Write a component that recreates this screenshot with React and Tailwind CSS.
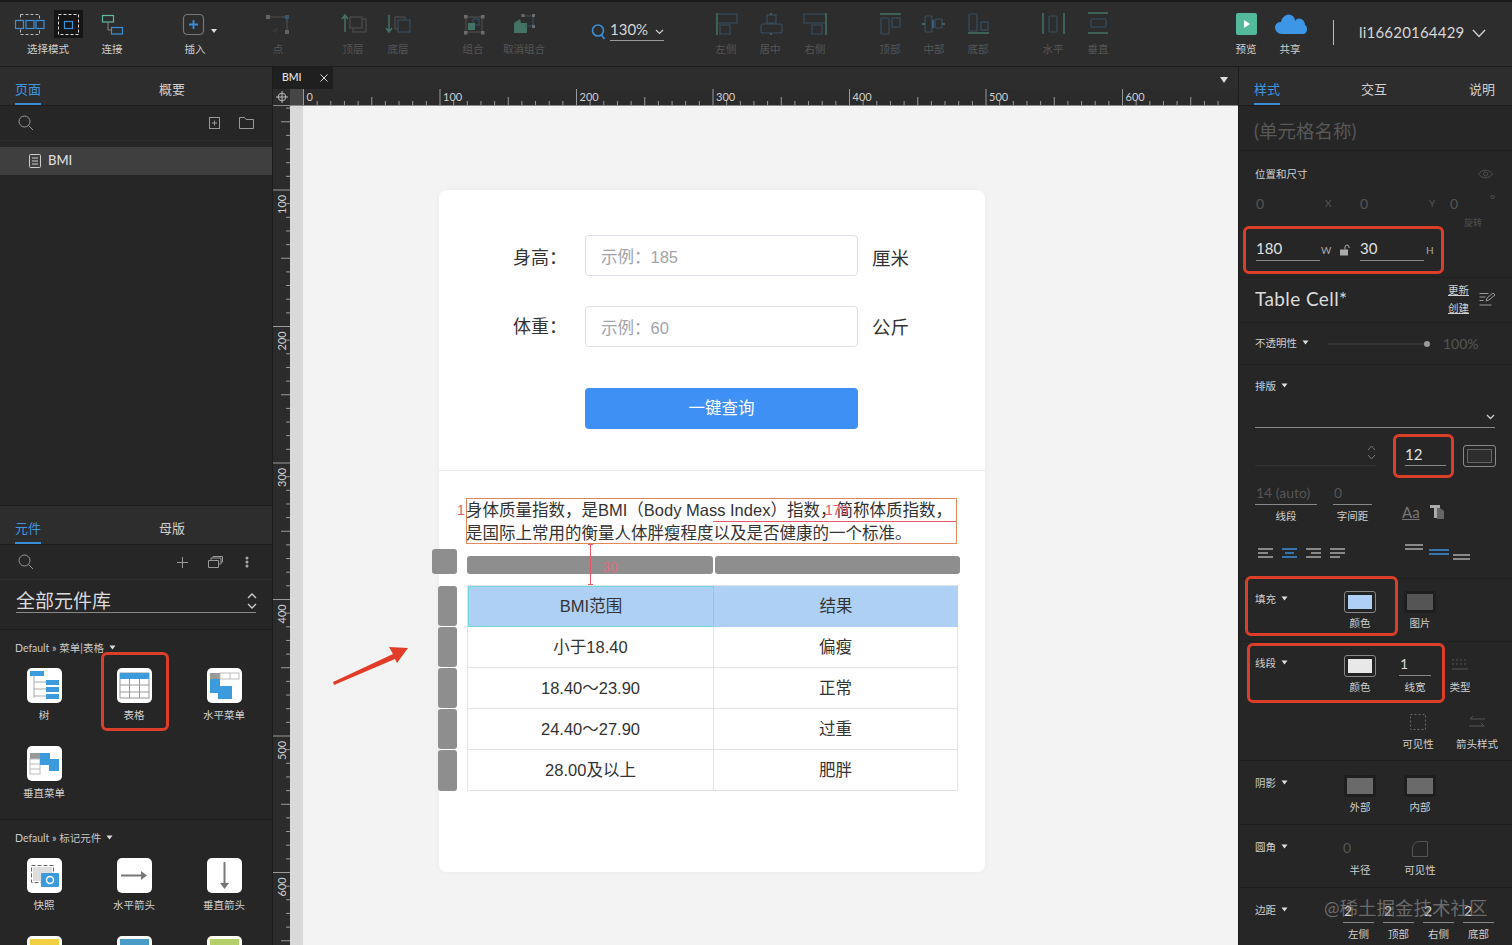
import React from "react";

const BLUE = "#3b8fd9";
const TEAL = "#5cb89f";

function Ic({ children, w = 44, h = 30, dim }) {
  return (
    <svg width={w} height={h} viewBox={`0 0 ${w} ${h}`} fill="none" className={dim ? "opacity-50 shrink-0" : "shrink-0"}>
      {children}
    </svg>
  );
}

const B = { stroke: "#3f6f96", strokeWidth: 1.2 };
const G = { stroke: "#6a6a6a", strokeWidth: 1.2 };
const T = { stroke: TEAL, strokeWidth: 1.5 };

const icons = {
  point: <><path d="M14 7H31V22" {...G} /><path d="M26 7h5v5" {...B} /><rect x="10" y="5" width="4" height="4" fill="#999" /><rect x="29" y="5" width="4" height="4" fill="#3f7fb0" /><rect x="29" y="20" width="4" height="4" fill="#999" /><path d="M16 21l6-4-1 6z" fill="#444" /></>,
  front: <><path d="M14 5v17M11 9l3-4 3 4" {...T} /><rect x="22" y="9" width="13" height="13" {...G} /><rect x="19" y="7" width="12" height="11" fill="#2d2d2d" {...G} /></>,
  back: <><path d="M13 5v17M10 18l3 4 3-4" {...T} /><rect x="19" y="7" width="10" height="12" {...G} /><rect x="22" y="10" width="12" height="12" fill="#2d2d2d" {...B} /></>,
  group: <><rect x="15" y="7" width="16" height="15" {...G} /><rect x="22" y="9" width="6" height="6" {...B} /><path d="M17 13h7v7h-7z" fill={TEAL} /><rect x="13" y="5" width="3.500" height="3.500" fill="#aaa" /><rect x="30" y="5" width="3.500" height="3.500" fill="#aaa" /><rect x="13" y="21" width="3.500" height="3.500" fill="#aaa" /><rect x="30" y="21" width="3.500" height="3.500" fill="#aaa" /></>,
  ungroup: <><path d="M12 13l6-4 1 4h6v10H12z" fill={TEAL} /><path d="M21 6H31V16H23" {...B} /><rect x="19.500" y="4" width="3" height="3" fill="#aaa" /><rect x="30" y="4" width="3" height="3" fill="#aaa" /><rect x="30" y="15" width="3" height="3" fill="#aaa" /></>,
  aLeft: <><path d="M13 3v22" {...T} /><path d="M14 4h19v9H14M16 15h10v9H16z" {...B} /></>,
  aCenter: <><path d="M23 3v2M23 13v1M23 23v2" {...T} /><rect x="19" y="5" width="9" height="8" {...B} /><rect x="13" y="14" width="21" height="9" rx="2" {...B} /></>,
  aRight: <><path d="M33 3v22" {...T} /><path d="M32 4H11v9h21M29 15H19v9h10z" {...B} /></>,
  vTop: <><path d="M12 4h21" {...T} /><rect x="13" y="8" width="8" height="16" rx="1" {...B} /><rect x="24" y="8" width="8" height="9" {...B} /></>,
  vMid: <><rect x="13" y="6" width="7" height="16" rx="1" {...B} /><rect x="23" y="9" width="7" height="9" rx="1" {...B} /><path d="M21 10v8" stroke={BLUE} strokeWidth="2" /><path d="M10 14h3M30 14h3" {...T} /></>,
  vBot: <><path d="M12 23h21" {...T} /><rect x="13" y="4" width="8" height="17" rx="1" {...B} /><rect x="25" y="12" width="7" height="8" {...B} /></>,
  dH: <><path d="M12 3v21M33 3v21" {...T} /><rect x="18" y="6" width="8" height="16" rx="1" {...B} /></>,
  dV: <><path d="M12 3h20M12 23h20" {...T} /><rect x="15" y="9" width="15" height="8" rx="1" {...B} /></>,
};

function Label({ children, dim }) {
  return <span className={`mt-[2px] h-[14px] text-[10.5px] leading-[14px] whitespace-nowrap ${dim ? "text-[#565656]" : "text-[#cfcfcf]"}`}>{children}</span>;
}

function Tool({ label, icon, ml, dim = true }) {
  return (
    <div className={`flex flex-col items-center w-[44px] shrink-0 ${ml}`}>
      <Ic dim={dim}>{icon}</Ic>
      <Label dim={dim}>{label}</Label>
    </div>
  );
}

function Toolbar() {
  return (
    <div className="flex h-[67px] shrink-0 items-start pt-[8px] pl-[8px] bg-[#2d2d2d] border-t-2 border-b border-[#1c1c1c]">
      <div className="flex flex-col items-center w-[80px] shrink-0">
        <Ic w={80} h={30}>
          <rect x="46" y="0" width="29" height="28" fill="#151515" />
          <rect x="12.5" y="4.5" width="19" height="20" stroke="#bbb" strokeDasharray="3 2" />
          <rect x="7.5" y="10.5" width="8" height="8" fill="#2d2d2d" stroke={BLUE} strokeWidth="1.2" />
          <rect x="18" y="10.5" width="8" height="8" fill="#2d2d2d" stroke={BLUE} strokeWidth="1.2" />
          <rect x="28" y="10.5" width="8" height="8" fill="#2d2d2d" stroke={BLUE} strokeWidth="1.2" />
          <rect x="50.5" y="4.5" width="20" height="20" stroke="#ddd" strokeDasharray="3 2" />
          <rect x="56.5" y="11.5" width="8" height="7" stroke={BLUE} strokeWidth="1.2" />
        </Ic>
        <Label>选择模式</Label>
      </div>
      <Tool ml="ml-[2px]" dim={false} label="连接" icon={<><rect x="12.5" y="5.5" width="11" height="6.5" stroke={TEAL} strokeWidth="1.2" /><rect x="21.5" y="17.5" width="11" height="6.5" stroke={BLUE} strokeWidth="1.2" /><path d="M18 12v8h3.5" stroke="#888" /></>} />
      <Tool ml="ml-[39px]" dim={false} label="插入" icon={<><rect x="10.5" y="4.5" width="20" height="20" rx="4" stroke="#777" strokeWidth="1.2" /><path d="M20.5 10v9M16 14.5h9" stroke={BLUE} strokeWidth="1.8" /><path d="M38 19h6l-3 4z" fill="#ddd" /></>} />
      <Tool ml="ml-[39px]" label="点" icon={icons.point} />
      <Tool ml="ml-[31px]" label="顶层" icon={icons.front} />
      <Tool ml="ml-[1px]" label="底层" icon={icons.back} />
      <Tool ml="ml-[31px]" label="组合" icon={icons.group} />
      <Tool ml="ml-[7px]" label="取消组合" icon={icons.ungroup} />
      <div className="ml-[44px] w-[78px] shrink-0 flex items-center h-[30px] mt-[5px] relative">
        <svg width="16" height="18" viewBox="0 0 16 18" fill="none" className="mt-[3px] shrink-0"><circle cx="8" cy="7.5" r="5.5" stroke={BLUE} strokeWidth="1.6" /><path d="M11.500 12l3 4" stroke={BLUE} strokeWidth="1.6" /></svg>
        <div className="ml-[4px] border-b border-[#999] w-[54px] h-[22px] flex items-center justify-between text-[15px] text-[#d6d6d6]">
          <span>130%</span>
          <svg width="9" height="6" viewBox="0 0 9 6" fill="none" className="mt-[5px]"><path d="M1 1l3.5 3.5L8 1" stroke="#ccc" strokeWidth="1.2" /></svg>
        </div>
      </div>
      <Tool ml="ml-[36px]" label="左侧" icon={icons.aLeft} />
      <Tool label="居中" icon={icons.aCenter} />
      <Tool ml="ml-[1px]" label="右侧" icon={icons.aRight} />
      <Tool ml="ml-[31px]" label="顶部" icon={icons.vTop} />
      <Tool label="中部" icon={icons.vMid} />
      <Tool label="底部" icon={icons.vBot} />
      <Tool ml="ml-[31px]" label="水平" icon={icons.dH} />
      <Tool ml="ml-[1px]" label="垂直" icon={icons.dV} />
      <Tool ml="ml-[104px]" dim={false} label="预览" icon={<><rect x="12" y="3" width="21" height="22" rx="2" fill="#52b99b" /><path d="M20 10l6 4-6 4z" fill="#fff" /></>} />
      <Tool dim={false} label="共享" icon={<path transform="translate(5 0)" d="M9 24c-4 0-7-3-7-6.5S5 12 8 12c1-5 6-9 10-7 3 1 4 4 4 6 1-2 4-3 6-2 3 1 4 4 4 6 3 1 3 9-2 9z" fill="#3d95e6" />} />
      <div className="ml-[21px] mt-[10px] w-px h-[25px] bg-[#bbb] shrink-0" />
      <div className="ml-[25px] mt-[11px] flex items-center text-[15px] text-[#d6d6d6] tracking-[0.2px]">
        <span>li16620164429</span>
        <svg width="14" height="9" viewBox="0 0 14 9" fill="none" className="ml-[8px] mt-[2px]"><path d="M1 1l6 6.5L13 1" stroke="#ccc" strokeWidth="1.5" /></svg>
      </div>
    </div>
  );
}

function Tabs({ items, className = "" }) {
  return (
    <div className={`flex items-start h-[39px] bg-[#2d2d2d] border-b border-[#1c1c1c] text-[13px] shrink-0 ${className}`}>
      {items.map((t, i) => (
        <div key={t.label} className={`${t.w} ${t.ml || ""} flex flex-col pt-[13px]`}>
          <span className={`leading-[18px] ${i === 0 ? "text-[#3f96e0]" : "text-[#d0d0d0]"}`}>{t.label}</span>
          {i === 0 && <span className="h-[2px] w-[26px] bg-[#3b8fd9] mt-[5px]" />}
        </div>
      ))}
    </div>
  );
}

function Tile({ label, children }) {
  return (
    <div className="flex flex-col items-center h-[78px]">
      <svg width="35" height="35" viewBox="0 0 35 35" fill="none"><rect width="35" height="35" rx="5" fill="#fff" />{children}</svg>
      <span className="mt-[5px] text-[10.5px] leading-[14px] text-[#d0d0d0] whitespace-nowrap">{label}</span>
    </div>
  );
}

function Caret() {
  return <svg width="7" height="5" viewBox="0 0 7 5" className="inline-block ml-[5px] mb-[3px]"><path d="M0.5 0.5h6l-3 4z" fill="#ddd" /></svg>;
}

function LeftPanel() {
  return (
    <div className="w-[273px] shrink-0 flex flex-col bg-[#262626] border-r border-[#1c1c1c] overflow-hidden">
      <Tabs items={[{ label: "页面", w: "w-[40px]", ml: "ml-[15px]" }, { label: "概要", w: "w-[26px]", ml: "ml-[104px]" }]} />
      <div className="h-[399px] shrink-0 flex flex-col">
        <div className="h-[35px] flex items-center pl-[18px] border-b border-[#2b2b2b] shrink-0">
          <svg width="16" height="16" viewBox="0 0 16 16" fill="none"><circle cx="6.5" cy="6.5" r="5.5" stroke="#999" /><path d="M10.5 10.5l4.5 4.5" stroke="#999" /></svg>
          <svg width="11" height="12" viewBox="0 0 11 12" fill="none" className="ml-[175px]"><rect x=".5" y=".5" width="10" height="11" stroke="#999" /><path d="M5.5 3.5v5M3 6h5" stroke="#999" /></svg>
          <svg width="15" height="12" viewBox="0 0 15 12" fill="none" className="ml-[19px]"><path d="M.5 11.5V.5h5l1.5 2h7.5v9z" stroke="#999" /></svg>
        </div>
        <div className="mt-[6px] h-[28px] bg-[#3f3f3f] flex items-center pl-[29px] text-[13px] text-[#dcdcdc] font-medium">
          <svg width="13" height="14" viewBox="0 0 13 14" fill="none"><rect x=".5" y=".5" width="11" height="13" rx="1" stroke="#ccc" /><path d="M3 4h6M3 7h6M3 10h6" stroke="#ccc" /></svg>
          <span className="ml-[6px]">BMI</span>
        </div>
      </div>
      <div className="border-t border-[#1c1c1c]">
        <Tabs items={[{ label: "元件", w: "w-[40px]", ml: "ml-[15px]" }, { label: "母版", w: "w-[26px]", ml: "ml-[104px]" }]} className="h-[38px]" />
      </div>
      <div className="h-[35px] flex items-center pl-[18px] shrink-0 border-b border-[#2d2d2d]">
        <svg width="16" height="16" viewBox="0 0 16 16" fill="none"><circle cx="6.5" cy="6.5" r="5.5" stroke="#999" /><path d="M10.5 10.5l4.5 4.5" stroke="#999" /></svg>
        <svg width="11" height="11" viewBox="0 0 11 11" fill="none" className="ml-[143px]"><path d="M5.5 0v11M0 5.5h11" stroke="#999" /></svg>
        <svg width="15" height="12" viewBox="0 0 15 12" fill="none" className="ml-[20px]"><path d="M.5 4.5h10v7H.5zM3 4V2h10v6h-2M5 2V.5h9.500V6h-1.500" stroke="#999" /></svg>
        <svg width="4" height="12" viewBox="0 0 4 12" className="ml-[22px]"><circle cx="2" cy="2" r="1.500" fill="#aaa" /><circle cx="2" cy="6" r="1.500" fill="#aaa" /><circle cx="2" cy="10" r="1.500" fill="#aaa" /></svg>
      </div>
      <div className="h-[50px] shrink-0 pt-[9px] px-[16px] border-b border-[#1c1c1c]">
        <div className="h-[24px] flex items-center justify-between border-b border-[#888] text-[19px] text-[#dcdcdc]">
          <span className="leading-[24px]">全部元件库</span>
          <svg width="10" height="16" viewBox="0 0 10 16" fill="none" className="mr-[-1px]"><path d="M1 5l4-4 4 4M1 11l4 4 4-4" stroke="#ccc" strokeWidth="1.3" /></svg>
        </div>
      </div>
      <div className="h-[190px] shrink-0 pt-[11px] border-b border-[#1c1c1c]">
        <div className="pl-[15px] h-[14px] text-[10.5px] leading-[14px] text-[#c8c8c8]">Default » 菜单|表格<Caret /></div>
        <div className="grid grid-cols-[90px_90px_90px] ml-[-1px] mt-[13px]">
          <Tile label="树">
            <rect x="3" y="3" width="14" height="5" fill="#3b9bdc" /><path d="M7 8v22M7 14h12M7 21h12M7 28h12" stroke="#aaa" />
            <rect x="19" y="12" width="13" height="5" fill="#3b9bdc" /><rect x="19" y="19" width="13" height="5" fill="#3b9bdc" /><rect x="19" y="26" width="13" height="5" fill="#3b9bdc" />
          </Tile>
          <Tile label="表格">
            <rect x="3" y="5" width="29" height="25" stroke="#999" /><rect x="3" y="5" width="29" height="6" fill="#3b9bdc" /><path d="M3 17h29M3 24h29M12.500 11v19M22.500 11v19" stroke="#999" />
          </Tile>
          <Tile label="水平菜单">
            <rect x="3" y="5" width="10" height="6" fill="#999" /><rect x="13" y="5" width="19" height="6" stroke="#bbb" /><path d="M23 5v6" stroke="#bbb" /><path d="M3 11h10v7h12v13H11v-6H3z" fill="#3b9bdc" />
          </Tile>
          <Tile label="垂直菜单">
            <rect x="3" y="7" width="10" height="6" fill="#999" /><rect x="3" y="13" width="10" height="15" stroke="#bbb" /><path d="M3 18h10M3 23h10" stroke="#bbb" /><path d="M13 7h10v6h9v12H22v-6h-9z" fill="#3b9bdc" />
          </Tile>
        </div>
      </div>
      <div className="pt-[11px]">
        <div className="pl-[15px] h-[14px] text-[10.5px] leading-[14px] text-[#c8c8c8]">Default » 标记元件<Caret /></div>
        <div className="grid grid-cols-[90px_90px_90px] ml-[-1px] mt-[13px]">
          <Tile label="快照">
            <rect x="4.500" y="7.500" width="22" height="17" stroke="#666" strokeDasharray="4 2" /><rect x="6" y="9" width="19" height="14" fill="#ddd" /><rect x="14" y="15" width="18" height="14" rx="1" fill="#3b9bdc" /><circle cx="23" cy="22" r="3.500" stroke="#fff" strokeWidth="1.500" />
          </Tile>
          <Tile label="水平箭头"><path d="M4 17.500h22" stroke="#777" strokeWidth="2" /><path d="M24 13l6 4.500-6 4.500z" fill="#777" /></Tile>
          <Tile label="垂直箭头"><path d="M17.500 4v23" stroke="#777" strokeWidth="2" /><path d="M13 25l4.500 6 4.500-6z" fill="#777" /></Tile>
          <Tile label=""><rect x="3" y="3" width="29" height="8" fill="#f0d040" /></Tile>
          <Tile label=""><rect x="3" y="3" width="29" height="8" fill="#4a9cc8" /></Tile>
          <Tile label=""><rect x="3" y="3" width="29" height="8" fill="#b5cf6b" /></Tile>
        </div>
      </div>
    </div>
  );
}

function HRuler() {
  const ticks = Array.from({ length: 72 }, (_, i) => i);
  return (
    <svg width="918" height="16" className="block shrink-0">
      {ticks.map((i) => {
        const x = 0.5 + i * 13.65;
        const big = i % 10 === 0;
        const mid = i % 5 === 0;
        return <line key={i} x1={x} x2={x} y1={big ? 0 : mid ? 8 : 12} y2={16} stroke="#9a9a9a" />;
      })}
      {[0, 100, 200, 300, 400, 500, 600].map((n, i) => (
        <text key={n} x={3.5 + i * 136.5} y={12} fontSize="11" fill="#cfcfcf">{n}</text>
      ))}
    </svg>
  );
}

function VRuler() {
  const ticks = Array.from({ length: 66 }, (_, i) => i);
  return (
    <svg width="17" height="839" className="block shrink-0">
      {ticks.map((i) => {
        const y = i * 13.65 - 53 + 0.5;
        const big = i % 10 === 0;
        const mid = i % 5 === 0;
        return <line key={i} y1={y} y2={y} x1={big ? 0 : mid ? 8 : 13} x2={17} stroke="#9a9a9a" />;
      })}
      {[100, 200, 300, 400, 500, 600].map((n, i) => (
        <text key={n} transform={`translate(12.500 ${108 + i * 136.5}) rotate(-90)`} fontSize="11" fill="#cfcfcf">{n}</text>
      ))}
    </svg>
  );
}

function FormRow({ label, ph, unit, mt = "", shift = "" }) {
  return (
    <div className={`flex items-center h-[41px] ${mt}`}>
      <span className={`w-[72px] ml-[74px] text-[18px] text-[#333] ${shift}`}>{label}</span>
      <div className="w-[273px] h-[41px] border border-[#dcdfe6] rounded-[4px] flex items-center pl-[15px] pt-[3px] text-[16.5px] text-[#a0a3a9] bg-white">{ph}</div>
      <span className={`ml-[14px] text-[18.5px] text-[#333] ${shift}`}>{unit}</span>
    </div>
  );
}

const rows = [["小于18.40", "偏瘦"], ["18.40～23.90", "正常"], ["24.40～27.90", "过重"], ["28.00及以上", "肥胖"]];

function Card() {
  return (
    <div className="relative w-[546px] h-[682px] bg-white rounded-[8px] shrink-0 font-['Liberation_Sans','Noto_Sans_CJK_SC',sans-serif] shadow-[0_0_6px_rgba(0,0,0,0.04)]">
      <div className="h-[281px] pt-[45px] border-b border-[#e6e6e6]">
        <FormRow label="身高：" ph="示例：185" unit="厘米" shift="mt-[6px]" />
        <FormRow label="体重：" ph="示例：60" unit="公斤" mt="mt-[30px]" shift="mt-[2px]" />
        <div className="mt-[41px] ml-[146px] w-[273px] h-[41px] rounded-[4px] bg-[#3e90f5] flex items-center justify-center text-[16.5px] text-white">一键查询</div>
      </div>
      <div className="relative ml-[27px] mt-[27px] w-[491px] h-[46px] border border-[#e0875e] text-[16.5px] leading-[23px] text-[#333] whitespace-nowrap">
        <div className="ml-[-1px]">身体质量指数，是BMI（Body Mass Index）指数，简称体质指数，</div>
        <div className="ml-[-1px]">是国际上常用的衡量人体胖瘦程度以及是否健康的一个标准。</div>
        <span className="absolute left-[-10px] top-0 text-[14px] leading-[22px] text-[#e8596b]">1</span>
        <span className="absolute left-[358px] top-0 text-[14px] leading-[22px] text-[#e8596b]">179</span>
        <span className="absolute left-[246px] right-0 top-[22px] h-px bg-[#e8596b]" />
      </div>
      <div className="relative ml-[28px] mt-[12px] flex gap-[2px]">
        <div className="absolute left-[-35px] top-[-7px] w-[25px] h-[25px] rounded-[3px] bg-[#8e8e8e]" />
        <div className="w-[246px] h-[18px] rounded-[3px] bg-[#8e8e8e]" />
        <div className="w-[245px] h-[18px] rounded-[3px] bg-[#8e8e8e]" />
        <div className="absolute left-[123px] top-[-12px] w-px h-[40px] bg-[#e8596b]" />
        <div className="absolute left-[121px] top-[-12px] w-[5px] h-px bg-[#e8596b]" />
        <div className="absolute left-[121px] top-[28px] w-[5px] h-px bg-[#e8596b]" />
        <span className="absolute left-[135px] top-[1px] text-[14px] leading-[20px] text-[#d9707c]">30</span>
      </div>
      <div className="relative ml-[28px] mt-[11px] w-[491px] border-l border-t border-[#e3e3e3] text-[16.5px] text-[#333]">
        <div className="absolute left-[-30px] top-0 flex flex-col gap-[1px]">
          {[0, 1, 2, 3].map((i) => <div key={i} className="w-[19px] h-[40px] rounded-[3px] bg-[#8e8e8e]" />)}
          <div className="w-[19px] h-[41px] rounded-[3px] bg-[#8e8e8e]" />
        </div>
        <div className="flex h-[41px] bg-[#aed0f5]">
          <div className="w-[246px] border border-[#6fd9d9] flex items-center justify-center">BMI范围</div>
          <div className="flex-1 flex items-center justify-center">结果</div>
        </div>
        {rows.map((r) => (
          <div key={r[0]} className="flex h-[41px] border-b border-[#e3e3e3]">
            <div className="w-[246px] border-r border-[#e3e3e3] flex items-center justify-center">{r[0]}</div>
            <div className="flex-1 border-r border-[#e3e3e3] flex items-center justify-center">{r[1]}</div>
          </div>
        ))}
      </div>
    </div>
  );
}

function Center() {
  return (
    <div className="flex-1 min-w-0 flex flex-col bg-[#2b2b2b] overflow-hidden">
      <div className="h-[22px] shrink-0 flex bg-[#2d2d2d] relative">
        <div className="w-[60px] bg-[#1f1f1f] flex items-center pl-[9px] text-[10.5px] font-medium text-[#e5e5e5]">
          <span>BMI</span>
          <svg width="8" height="8" viewBox="0 0 8 8" fill="none" className="ml-[18px]"><path d="M.5.5l7 7M7.500.5l-7 7" stroke="#ddd" /></svg>
        </div>
        <svg width="8" height="6" viewBox="0 0 8 6" className="absolute right-[10px] top-[10px]"><path d="M0 0h8L4 6z" fill="#ddd" /></svg>
      </div>
      <div className="h-[17px] shrink-0 flex border-b border-[#888]">
        <div className="w-[17px] flex items-center justify-center shrink-0">
          <svg width="12" height="12" viewBox="0 0 12 12" fill="none"><circle cx="6" cy="6" r="3.800" stroke="#bbb" /><path d="M6 0v12M0 6h12" stroke="#bbb" /></svg>
        </div>
        <div className="w-[13px] bg-[#454545] shrink-0" />
        <HRuler />
      </div>
      <div className="flex-1 min-h-0 flex">
        <VRuler />
        <div className="w-[13px] bg-[#d9d9d9] shrink-0" />
        <div className="flex-1 min-w-0 bg-[#f3f3f3] pt-[84px] pl-[136px] overflow-hidden">
          <Card />
        </div>
      </div>
    </div>
  );
}

function Sec({ h, children, className = "" }) {
  return <div className={`${h} shrink-0 border-b border-[#1f1f1f] relative ${className}`}>{children}</div>;
}

function Title({ children, mt = "", caret }) {
  return <div className={`pl-[16px] h-[14px] text-[10.5px] leading-[14px] text-[#cfcfcf] ${mt}`}>{children}{caret && <Caret />}</div>;
}

function Swatch({ color, mute }) {
  return (
    <div className={`w-[32px] h-[22px] rounded-[3px] p-[3px] ${mute ? "bg-[#1e1e1e]" : "border border-[#888] bg-[#222]"}`}>
      <div className="w-full h-full" style={{ background: color }} />
    </div>
  );
}

function SwatchCell({ color, label, mute, w = "w-[60px]" }) {
  return (
    <div className={`${w} flex flex-col items-center shrink-0`}>
      <Swatch color={color} mute={mute} />
      <span className="mt-[3px] h-[14px] text-[10.5px] leading-[14px] text-[#cfcfcf]">{label}</span>
    </div>
  );
}

function Num({ v, label, w = "w-[39px]", ml = "", lmt = "mt-[4px]" }) {
  return (
    <div className={`${w} ${ml} flex flex-col shrink-0`}>
      <div className="h-[21px] border-b border-[#888] text-[14px] leading-[18px] text-[#d6d6d6] pl-[1px]">{v}</div>
      <span className={`${lmt} h-[14px] text-[10.5px] leading-[14px] text-[#cfcfcf] text-center`}>{label}</span>
    </div>
  );
}

function AlignIc({ w = 15, color = "#aaa", d }) {
  return <svg width={w} height="12" viewBox={`0 0 ${w} 12`} fill="none"><path d={d} stroke={color} strokeWidth="1.500" /></svg>;
}

function RightPanel() {
  return (
    <div className="w-[274px] shrink-0 flex flex-col bg-[#262626] border-l border-[#1c1c1c] overflow-hidden">
      <Tabs items={[{ label: "样式", w: "w-[26px]", ml: "ml-[15px]" }, { label: "交互", w: "w-[26px]", ml: "ml-[81px]" }, { label: "说明", w: "w-[26px]", ml: "ml-[82px]" }]} />
      <Sec h="h-[45px]"><div className="pl-[15px] pt-[13px] text-[18.500px] leading-[24px] text-[#585858]">(单元格名称)</div></Sec>
      <Sec h="h-[127px]">
        <div className="flex items-center pt-[16px] pr-[19px] justify-between">
          <Title>位置和尺寸</Title>
          <svg width="15" height="10" viewBox="0 0 15 10" fill="none" className="opacity-50"><path d="M.5 5C4 0 11 0 14.500 5 11 10 4 10 .5 5z" stroke="#777" /><circle cx="7.500" cy="5" r="2" stroke="#777" /></svg>
        </div>
        <div className="flex items-center h-[20px] mt-[12px] pl-[17px] text-[14px] text-[#555]">
          <span className="w-[69px]">0</span><span className="w-[35px] text-[10px]">X</span>
          <span className="w-[69px]">0</span><span className="w-[21px] text-[10px]">Y</span>
          <span className="w-[40px]">0</span><span className="text-[12px] mb-[6px]">°</span>
        </div>
        <div className="h-[12px] mt-[4px] pl-[225px] text-[9px] leading-[12px] text-[#505050]">旋转</div>
        <div className="flex items-center h-[22px] mt-[10px] pl-[17px] text-[15px] text-[#e0e0e0]">
          <span className="w-[64px] h-[22px] border-b border-[#888] leading-[19px]">180</span>
          <span className="ml-[1px] text-[10px] text-[#aaa] w-[10px]">W</span>
          <svg width="12" height="12" viewBox="0 0 12 12" className="ml-[8px]"><rect x="1" y="5.500" width="8" height="6" fill="#aaa" /><path d="M6 5.500V3a2 2 0 0 1 4 0v1" stroke="#aaa" fill="none" /></svg>
          <span className="ml-[9px] w-[64px] h-[22px] border-b border-[#888] leading-[19px]">30</span>
          <span className="ml-[2px] text-[10px] text-[#aaa]">H</span>
        </div>
      </Sec>
      <Sec h="h-[45px]">
        <div className="flex h-full items-center pl-[16px] pb-[2px]">
          <span className="w-[193px] text-[19px] tracking-[0.4px] text-[#dcdcdc]">Table Cell*</span>
          <div className="flex flex-col gap-[4px] text-[10.5px] leading-[14px] text-[#d0d0d0] underline"><span>更新</span><span>创建</span></div>
          <svg width="17" height="14" viewBox="0 0 17 14" fill="none" className="ml-[10px]"><path d="M.5 1.500h9M.5 5h6M.5 8.500h4M.5 13h12M7 9l1-3 6-5 2 2-6 5z" stroke="#999" /></svg>
        </div>
      </Sec>
      <Sec h="h-[42px]">
        <div className="flex items-center h-full pl-[16px]">
          <span className="w-[73px] text-[10.5px] text-[#cfcfcf] whitespace-nowrap">不透明性<Caret /></span>
          <div className="relative w-[100px] h-[2px] bg-[#333]"><span className="absolute right-[-2px] top-[-2px] w-[6px] h-[6px] rounded-full bg-[#999]" /></div>
          <span className="ml-[15px] text-[14px] text-[#555]">100%</span>
        </div>
      </Sec>
      <Sec h="h-[214px]">
        <Title mt="mt-[14px]" caret>排版</Title>
        <div className="ml-[16px] mt-[14px] h-[21px] border-b border-[#888] flex justify-end items-start pt-[7px] w-[240px]">
          <svg width="9" height="6" viewBox="0 0 9 6" fill="none"><path d="M1 1l3.500 3.500L8 1" stroke="#ccc" strokeWidth="1.300" /></svg>
        </div>
        <div className="flex items-end h-[38px] pl-[16px]">
          <div className="w-[121px] h-[27px] border-b border-[#333] flex justify-end items-center">
            <svg width="9" height="15" viewBox="0 0 9 15" fill="none"><path d="M1 5l3.500-4L8 5M1 10l3.500 4L8 10" stroke="#777" /></svg>
          </div>
          <div className="ml-[29px] w-[41px] h-[27px] border-b border-[#888] text-[15px] leading-[30px] text-[#e0e0e0]">12</div>
          <div className="ml-[17px] mb-[-1px] w-[33px] h-[22px] border border-[#888] rounded-[3px] p-[3px] self-end"><div className="w-full h-full border border-[#666] bg-[#2e2e2e]" /></div>
        </div>
        <div className="flex pl-[16px] mt-[18px] items-start">
          <Num v={<span className="text-[#555]">14 (auto)</span>} label="线段" w="w-[62px]" />
          <Num v={<span className="text-[#555]">0</span>} label="字间距" ml="ml-[16px]" />
          <span className="ml-[30px] mt-[20px] text-[15px] leading-[17px] text-[#777] underline">Aa</span>
          <svg width="17" height="16" viewBox="0 0 17 16" className="ml-[9px] mt-[20px]"><path d="M1 1h10v3H8v10H5V4H1z" fill="#aaa" /><path d="M11 4l4 3v8H8V4z" fill="#666" /></svg>
        </div>
        <div className="flex pl-[19px] mt-[20px] items-center">
          <div className="flex gap-[9px] w-[147px]">
            <AlignIc d="M0 2h15M0 6h10M0 10h15" />
            <AlignIc color={BLUE} d="M0 2h15M3 6h9M0 10h15" />
            <AlignIc d="M0 2h15M5 6h10M0 10h15" />
            <AlignIc d="M0 2h15M0 6h15M0 10h10" />
          </div>
          <svg width="66" height="20" viewBox="0 0 66 20" fill="none"><path d="M0 2h18M0 6h18" stroke="#aaa" strokeWidth="1.500" /><path d="M24 7h20M24 11h20" stroke={BLUE} strokeWidth="1.500" /><path d="M48 12h17M48 16h17" stroke="#aaa" strokeWidth="1.500" /></svg>
        </div>
      </Sec>
      <Sec h="h-[63px]">
        <div className="flex pt-[12px]">
          <Title mt="mt-[1px] w-[90px]" caret>填充</Title>
          <SwatchCell color="#aed0f5" label="颜色" w="w-[62px]" />
          <SwatchCell color="#555" label="图片" mute w="w-[58px]" />
        </div>
      </Sec>
      <Sec h="h-[119px]">
        <div className="flex pt-[13px]">
          <Title mt="mt-[1px] w-[90px]" caret>线段</Title>
          <SwatchCell color="#e8e8e8" label="颜色" w="w-[62px]" />
          <Num v="1" label="线宽" w="w-[32px]" ml="ml-[8px]" />
          <div className="ml-[11px] w-[36px] flex flex-col items-center shrink-0">
            <svg width="18" height="22" viewBox="0 0 18 22" fill="none"><path d="M1 5h16M1 9h16" stroke="#555" strokeDasharray="2 2" /><path d="M1 14h16" stroke="#555" /></svg>
            <span className="mt-[3px] text-[10.5px] leading-[14px] text-[#cfcfcf]">类型</span>
          </div>
        </div>
        <div className="flex mt-[20px] pl-[147px]">
          <div className="w-[64px] flex flex-col items-center">
            <svg width="16" height="16" viewBox="0 0 16 16" fill="none"><rect x=".5" y=".5" width="15" height="15" stroke="#666" strokeDasharray="2 2" /></svg>
            <span className="mt-[7px] text-[10.5px] leading-[14px] text-[#cfcfcf]">可见性</span>
          </div>
          <div className="ml-[-3px] w-[60px] flex flex-col items-center">
            <svg width="16" height="16" viewBox="0 0 16 16" fill="none"><path d="M4 2L1 5h15M12 9l3 3H0" stroke="#555" /></svg>
            <span className="mt-[7px] text-[10.5px] leading-[14px] text-[#cfcfcf] whitespace-nowrap">箭头样式</span>
          </div>
        </div>
      </Sec>
      <Sec h="h-[64px]">
        <div className="flex pt-[14px]">
          <Title mt="mt-[1px] w-[90px]" caret>阴影</Title>
          <SwatchCell color="#6a6a6a" label="外部" mute w="w-[62px]" />
          <SwatchCell color="#6a6a6a" label="内部" mute w="w-[58px]" />
        </div>
      </Sec>
      <Sec h="h-[63px]">
        <div className="flex pt-[14px]">
          <Title mt="mt-[1px] w-[90px]" caret>圆角</Title>
          <div className="w-[62px] pr-[26px] flex flex-col items-center shrink-0">
            <span className="h-[22px] text-[14px] leading-[20px] text-[#555] mt-[-1px]">0</span>
            <span className="mt-[3px] ml-[26px] text-[10.5px] leading-[14px] text-[#cfcfcf] whitespace-nowrap">半径</span>
          </div>
          <div className="w-[58px] flex flex-col items-center shrink-0">
            <svg width="16" height="16" viewBox="0 0 16 16" fill="none" className="mt-[2px]"><path d="M.5 15.500V8Q.5.500 8 .5h7.500v15z" stroke="#555" /></svg>
            <span className="mt-[6px] text-[10.5px] leading-[14px] text-[#cfcfcf]">可见性</span>
          </div>
        </div>
      </Sec>
      <div className="flex pt-[14px]">
        <Title mt="mt-[1px] w-[90px]" caret>边距</Title>
      </div>
      <div className="flex pl-[104px] mt-[-15px]">
        {["左侧", "顶部", "右侧", "底部"].map((l, i) => <Num key={l} v="2" label={l} w="w-[31px]" ml={i ? "ml-[9px]" : ""} />)}
      </div>
    </div>
  );
}

function RedBox({ cls }) {
  return <div className={`absolute border-[3px] border-[#db3f2a] rounded-[6px] pointer-events-none ${cls}`} />;
}

export default function App() {
  return (
    <div className="relative w-[1512px] h-[945px] overflow-hidden flex flex-col bg-[#262626] font-['Lato','Noto_Sans_CJK_SC',sans-serif]">
      <Toolbar />
      <div className="flex-1 min-h-0 flex">
        <LeftPanel />
        <Center />
        <RightPanel />
      </div>
      <RedBox cls="left-[101px] top-[652px] w-[68px] h-[79px]" />
      <RedBox cls="left-[1243px] top-[226px] w-[201px] h-[48px]" />
      <RedBox cls="left-[1393px] top-[434px] w-[61px] h-[44px]" />
      <RedBox cls="left-[1245px] top-[576px] w-[153px] h-[60px]" />
      <RedBox cls="left-[1247px] top-[643px] w-[198px] h-[60px]" />
      <svg width="80" height="40" viewBox="0 0 80 40" className="absolute left-[331px] top-[646px]">
        <path d="M2 36L62 8 58 1 77 2 66 17 64 13 3 39z" fill="#e03c28" />
      </svg>
      <span className="absolute left-[1324px] top-[895px] text-[18.500px] leading-[26px] text-[#8a8a8a]/70 whitespace-nowrap">@稀土掘金技术社区</span>
    </div>
  );
}
